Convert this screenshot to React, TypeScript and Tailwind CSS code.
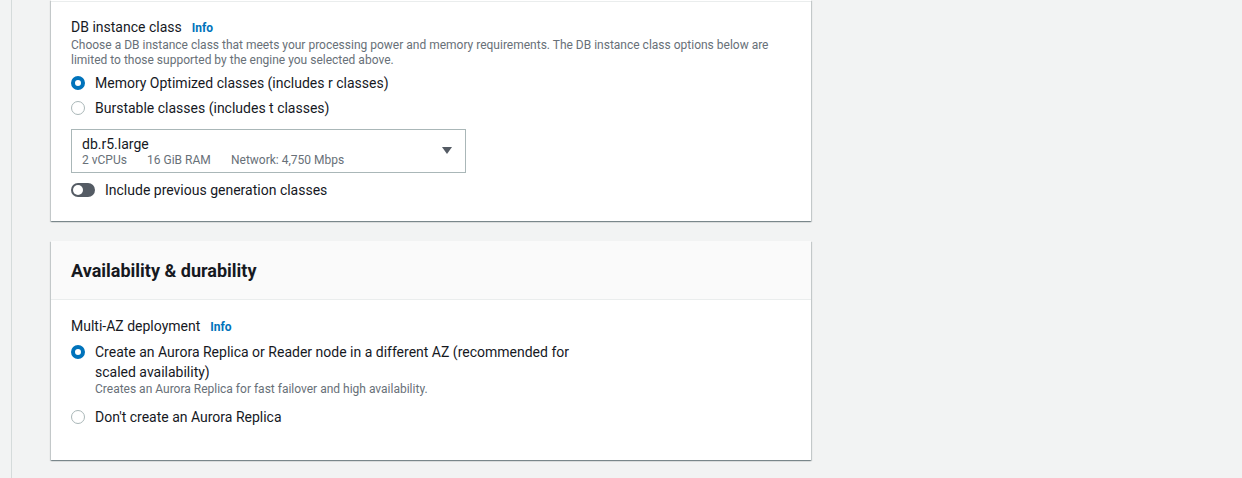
import React from 'react';

const font = { fontFamily: 'Roboto, "Liberation Sans", Arial, sans-serif' };

const Info = () => (
  <span className="ml-[10px] text-[12px] font-bold text-[#0073bb]">Info</span>
);

const Radio: React.FC<{ checked?: boolean }> = ({ checked }) =>
  checked ? (
    <span className="mt-[3px] box-border h-[14px] w-[14px] shrink-0 rounded-full border-[4px] border-[#0073bb] bg-white" />
  ) : (
    <span className="mt-[3px] box-border h-[14px] w-[14px] shrink-0 rounded-full border border-[#aab7b8] bg-white" />
  );

const RadioRow: React.FC<{ checked?: boolean; label: string; hint?: string }> = ({
  checked,
  label,
  hint,
}) => (
  <label className="flex items-start gap-[10px]">
    <Radio checked={checked} />
    <div className="max-w-[500px]">
      <div className="text-[14px] leading-[20px] text-[#16191f]">{label}</div>
      {hint && <div className="text-[12px] leading-[14px] text-[#687078]">{hint}</div>}
    </div>
  </label>
);

const Card: React.FC<{ className?: string; children: React.ReactNode }> = ({ className = '', children }) => (
  <div
    className={`w-[760px] bg-white shadow-[0_1px_1px_0_rgba(0,28,36,0.3),1px_1px_1px_0_rgba(0,28,36,0.15),-1px_1px_1px_0_rgba(0,28,36,0.15)] ${className}`}
  >
    {children}
  </div>
);

export default function App() {
  return (
    <div className="flex h-[478px] w-[1242px] overflow-hidden bg-[#f2f3f3]" style={font}>
      <div className="w-[12px] shrink-0 border-r border-[#d5dbdb]" />
      <div className="flex flex-col pl-[39px]">
        <Card>
          <div className="border-t border-[#eaeded] mt-px px-[20px] pt-[15px] pb-[21px]">
            <div className="text-[14px] leading-[20px] text-[#16191f]">
              DB instance class
              <Info />
            </div>
            <p className="text-[12px] leading-[15px] text-[#687078]">
              Choose a DB instance class that meets your processing power and memory requirements. The DB instance class
              options below are limited to those supported by the engine you selected above.
            </p>
            <div className="mt-[5px] flex flex-col gap-[5px]">
              <RadioRow checked label="Memory Optimized classes (includes r classes)" />
              <RadioRow label="Burstable classes (includes t classes)" />
            </div>
            <div className="mt-[11px] flex h-[44px] w-[395px] items-center justify-between border border-[#aab7b8] pl-[10px] pr-[13px]">
              <div>
                <div className="text-[14px] leading-[18px] text-[#16191f]">db.r5.large</div>
                <div className="flex text-[12px] leading-[15px] text-[#687078]">
                  <span className="w-[65px]">2 vCPUs</span>
                  <span className="w-[84px]">16 GiB RAM</span>
                  <span>Network: 4,750 Mbps</span>
                </div>
              </div>
              <svg width="10" height="8" viewBox="0 0 10 8">
                <path d="M0 0 H10 L5 7 Z" fill="#545b64" />
              </svg>
            </div>
            <div className="mt-[7px] flex items-center gap-[10px]">
              <span className="flex h-[14px] w-[24px] items-center rounded-full bg-[#545b64] pl-[2px]">
                <span className="h-[10px] w-[10px] rounded-full bg-white" />
              </span>
              <span className="text-[14px] leading-[20px] text-[#16191f]">Include previous generation classes</span>
            </div>
          </div>
        </Card>

        <Card className="mt-[20px]">
          <div className="flex h-[59px] items-center border-b border-[#eaeded] bg-[#fafafa] px-[20px]">
            <h2 className="text-[18px] font-bold text-[#16191f]">Availability &amp; durability</h2>
          </div>
          <div className="px-[20px] pt-[16px] pb-[33px]">
            <div className="text-[14px] leading-[20px] text-[#16191f]">
              Multi-AZ deployment
              <Info />
            </div>
            <div className="mt-[5px] flex flex-col gap-[11px]">
              <RadioRow
                checked
                label="Create an Aurora Replica or Reader node in a different AZ (recommended for scaled availability)"
                hint="Creates an Aurora Replica for fast failover and high availability."
              />
              <RadioRow label="Don't create an Aurora Replica" />
            </div>
          </div>
        </Card>
      </div>
    </div>
  );
}
